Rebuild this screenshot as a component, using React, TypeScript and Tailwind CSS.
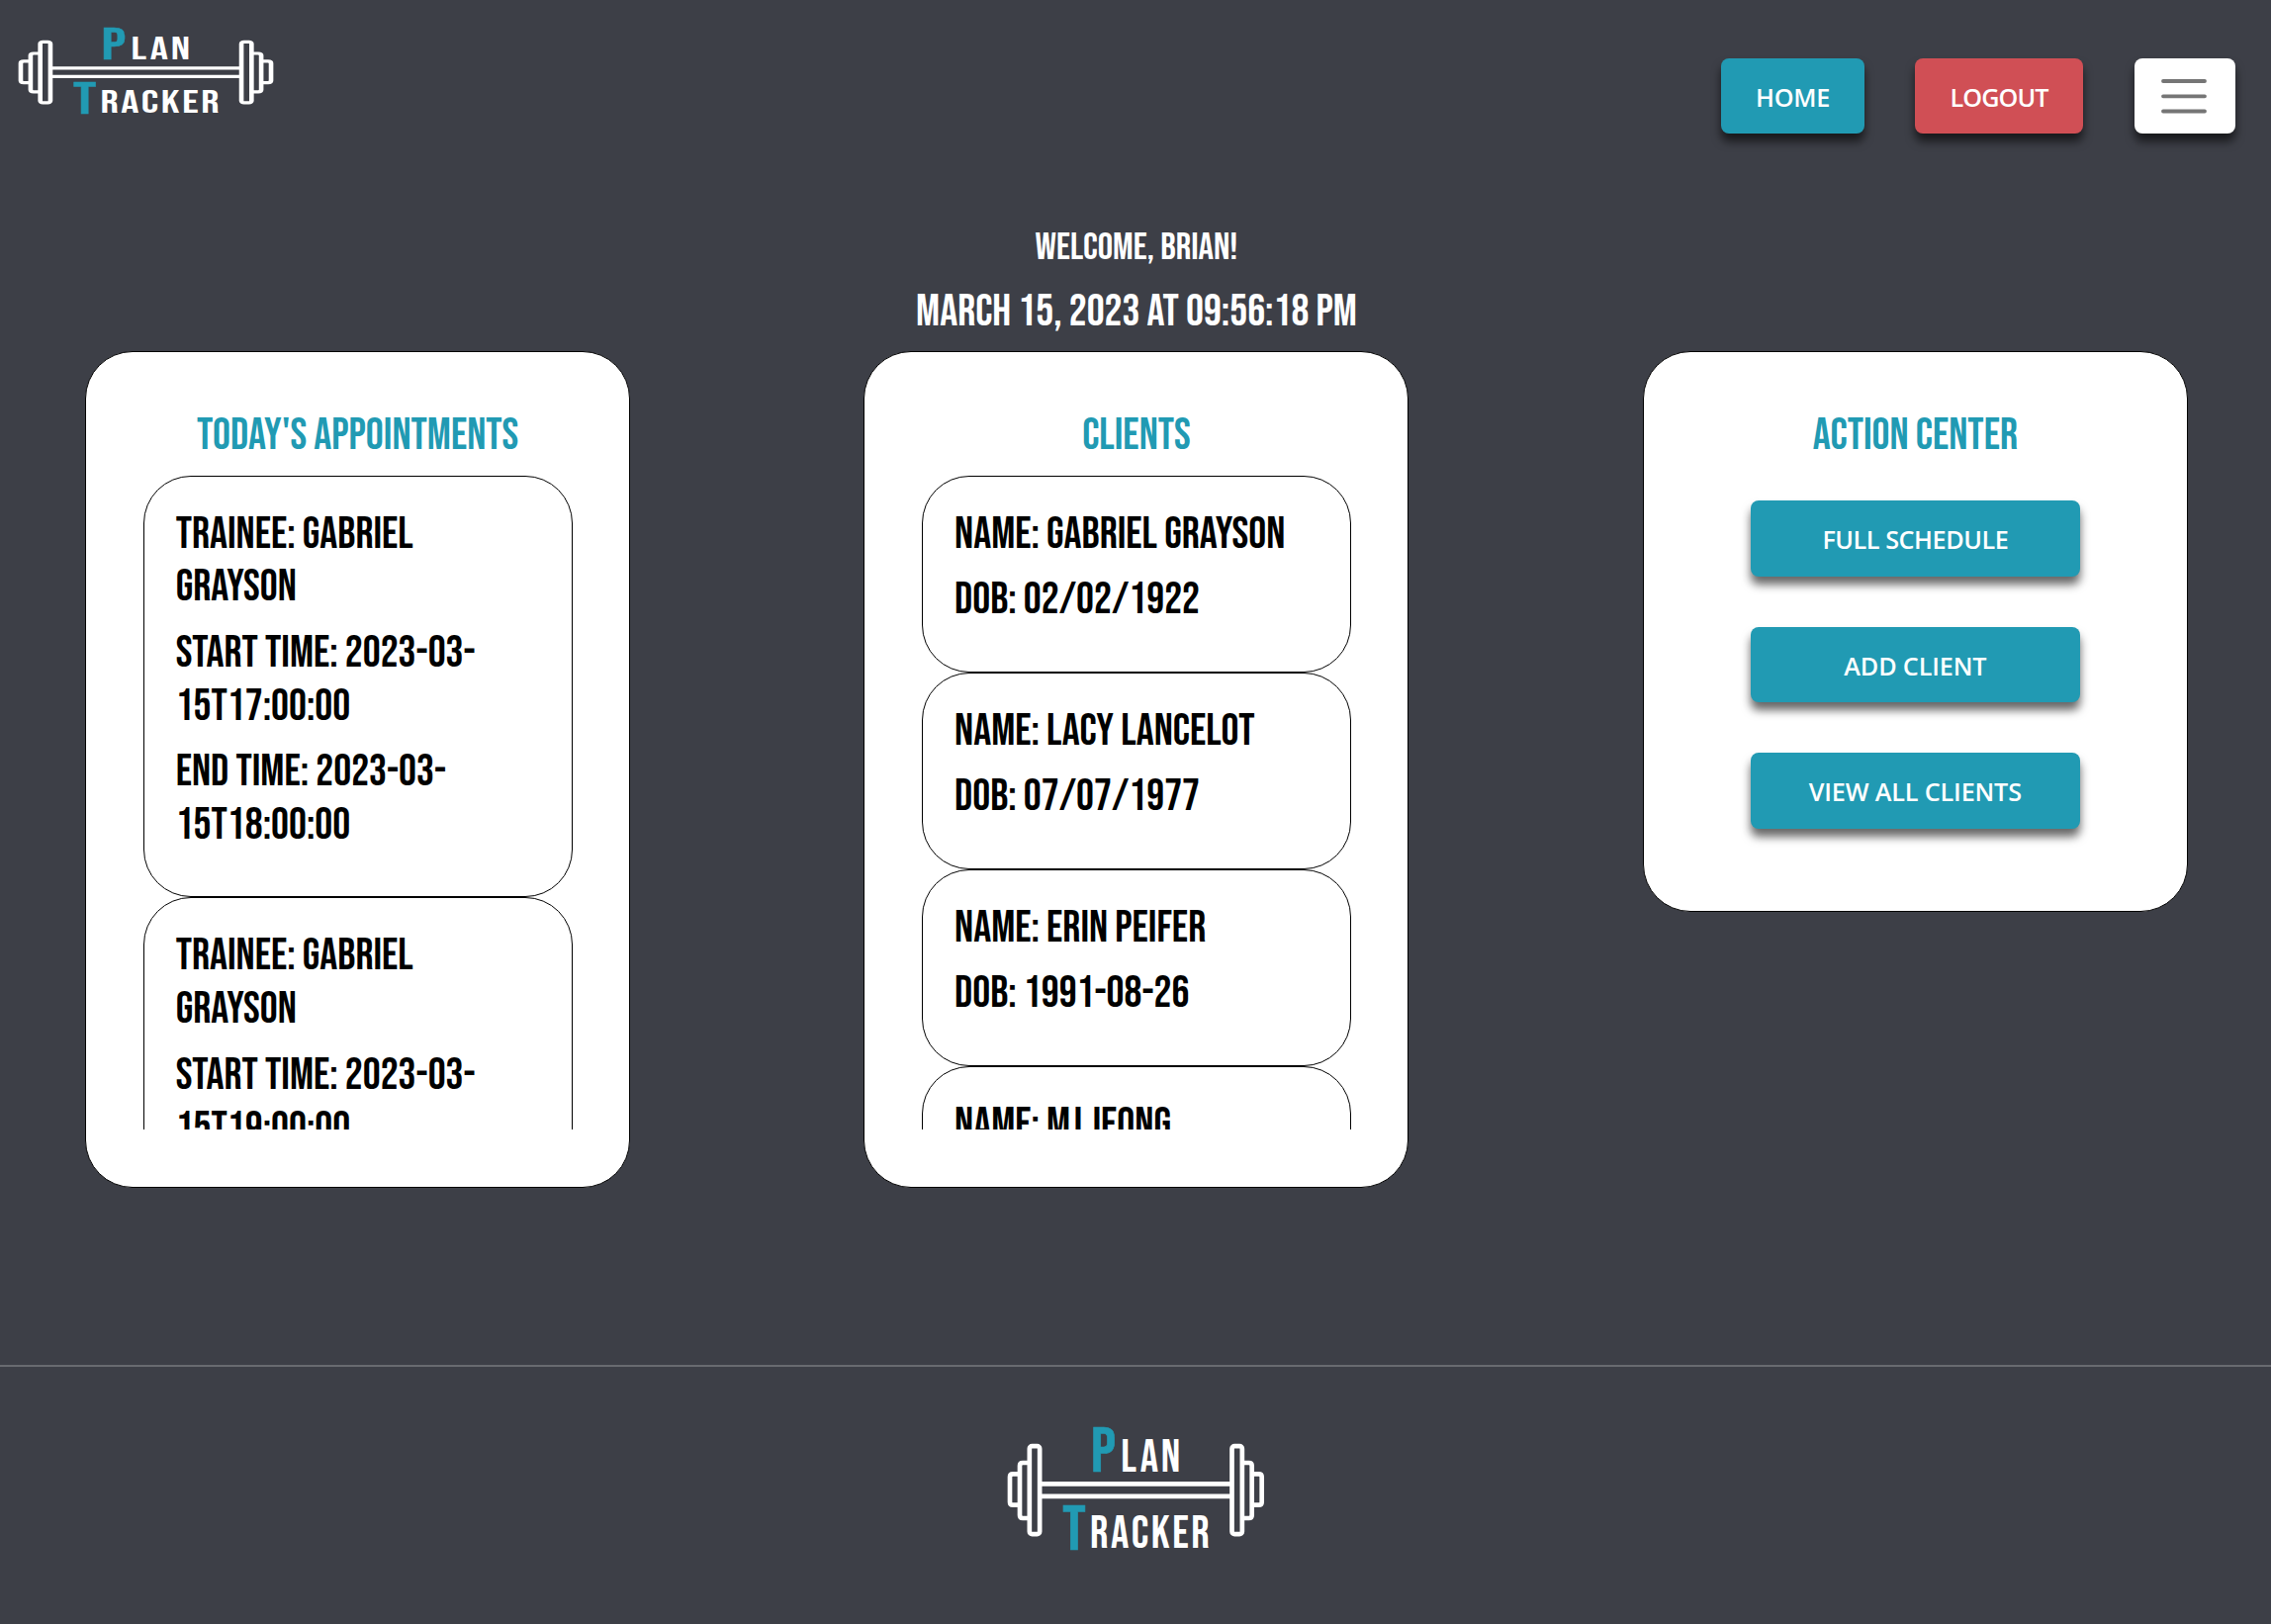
import type { ReactNode } from "react";

const appointments = [
  { trainee: "Gabriel Grayson", start: "2023-03-15T17:00:00", end: "2023-03-15T18:00:00" },
  { trainee: "Gabriel Grayson", start: "2023-03-15T19:00:00", end: "2023-03-15T20:00:00" },
];

const clients = [
  { name: "Gabriel Grayson", dob: "02/02/1922" },
  { name: "Lacy Lancelot", dob: "07/07/1977" },
  { name: "Erin Peifer", dob: "1991-08-26" },
  { name: "MJ Jeong", dob: "1995-04-12" },
];

function Plates() {
  return (
    <>
      <rect x="124.5" y="276.5" width="31" height="267" rx="8" />
      <path d="M124 327H104q-9 0-9 9V486q0 9 9 9H124" />
      <path d="M95 361H74q-9 0-9 9V446q0 9 9 9H95" />
    </>
  );
}

function Logo({ className }: { className: string }) {
  return (
    <svg viewBox="50 210 794 390" preserveAspectRatio="none" className={`overflow-visible ${className}`} role="img" aria-label="Plan Tracker">
      <g fill="none" stroke="#fff" strokeWidth="14">
        <Plates />
        <g transform="translate(894 0) scale(-1 1)">
          <Plates />
        </g>
        <path d="M160 391H734M160 428.500H734" />
      </g>
      <g className="font-['Bebas_Neue']" fill="#fff">
        <text x="311" y="354" fontSize="193" fill="#219ab3" stroke="#219ab3" strokeWidth="2">P</text>
        <text x="402 460 523" y="354" fontSize="137">LAN</text>
        <text x="225" y="591" fontSize="193" fill="#219ab3" stroke="#219ab3" strokeWidth="2">T</text>
        <text x="308 371 433 493 558 615" y="586" fontSize="137">RACKER</text>
      </g>
    </svg>
  );
}

function Button({ children, className = "" }: { children: ReactNode; className?: string }) {
  return (
    <button
      className={`flex items-center justify-center rounded-[8px] font-['Open_Sans'] text-[25.2px] leading-[38.4px] font-semibold whitespace-nowrap text-white uppercase shadow-[0_8px_10px_rgba(0,0,0,0.6)] ${className}`}
    >
      {children}
    </button>
  );
}

function Card({ title, children }: { title: string; children: ReactNode }) {
  return (
    <section className="w-[24%] shrink-0 rounded-[48px] border border-black bg-white p-[57.6px]">
      <h3 className="mb-[13px] text-center text-[44.8px] leading-[1.2] text-[#219ab3]">{title}</h3>
      {children}
    </section>
  );
}

function Entry({ lines }: { lines: string[] }) {
  return (
    <li className="rounded-[48px] border border-black p-8 text-[44.8px] leading-[1.2] text-black">
      {lines.map((line) => (
        <p key={line} className="mb-[12.8px]">{line}</p>
      ))}
    </li>
  );
}

export default function App() {
  return (
    <div className="flex h-[1642px] w-[2296px] flex-col overflow-hidden bg-[#3d3f47] font-['Bebas_Neue'] uppercase">
      <header className="flex h-[228px] shrink-0 items-start justify-between pr-9 pl-4">
        <Logo className="mt-[27px] h-[90px] w-[263px]" />
        <nav className="mt-[59px] flex">
          <Button className="mr-[51px] h-[76px] w-[145px] bg-[#219ab3] pt-[3px] tracking-[-0.3px]">Home</Button>
          <Button className="mr-[52px] h-[76px] w-[170px] bg-[#d04f55] pt-[3px] tracking-[-0.9px]">Logout</Button>
          <Button className="h-[76px] w-[102px] bg-white">
            <svg viewBox="0 0 48 36" className="mr-[1.500px] h-9 w-12" fill="none" stroke="#757575" strokeWidth="3.8" strokeLinecap="round" aria-label="Menu">
              <path d="M3 3H45M3 18.300H45M3 33.500H45" />
            </svg>
          </Button>
        </nav>
      </header>

      <div className="pl-[2px] text-center leading-[1.2] text-white">
        <h4 className="mb-[14.600px] text-[38.4px]">Welcome, Brian!</h4>
        <h3 className="mb-[12.8px] text-[44.8px]">March 15, 2023 at 09:56:18 PM</h3>
      </div>

      <main className="flex-1">
        <div className="flex items-start gap-[236.340px] pl-[86.100px] [&>section]:w-[551.040px]">
          <Card title="Today's Appointments">
            <ul className="h-[661.400px] overflow-hidden">
              {appointments.map((a) => (
                <Entry key={a.start} lines={[`Trainee: ${a.trainee}`, `Start Time: ${a.start}`, `End Time: ${a.end}`]} />
              ))}
            </ul>
          </Card>
          <Card title="Clients">
            <ul className="h-[661.400px] overflow-hidden">
              {clients.map((c) => (
                <Entry key={c.name} lines={[`Name: ${c.name}`, `DOB: ${c.dob}`]} />
              ))}
            </ul>
          </Card>
          <Card title="Action Center">
            <div className="flex flex-col items-center gap-[51px] py-[25.6px]">
              <Button className="h-[76.600px] w-[333px] bg-[#219ab3] pt-[2px] tracking-[-0.45px]">Full Schedule</Button>
              <Button className="h-[76.600px] w-[333px] bg-[#219ab3] pt-[2px] tracking-[-0.15px]">Add Client</Button>
              <Button className="h-[76.600px] w-[333px] bg-[#219ab3] pt-[2px] tracking-[-0.15px]">View All Clients</Button>
            </div>
          </Card>
        </div>
      </main>

      <footer className="flex h-[262px] shrink-0 justify-center border-t-2 border-[#696b70] pt-[58px] pl-[1px]">
        <Logo className="h-[130px] w-[264.700px]" />
      </footer>
    </div>
  );
}
